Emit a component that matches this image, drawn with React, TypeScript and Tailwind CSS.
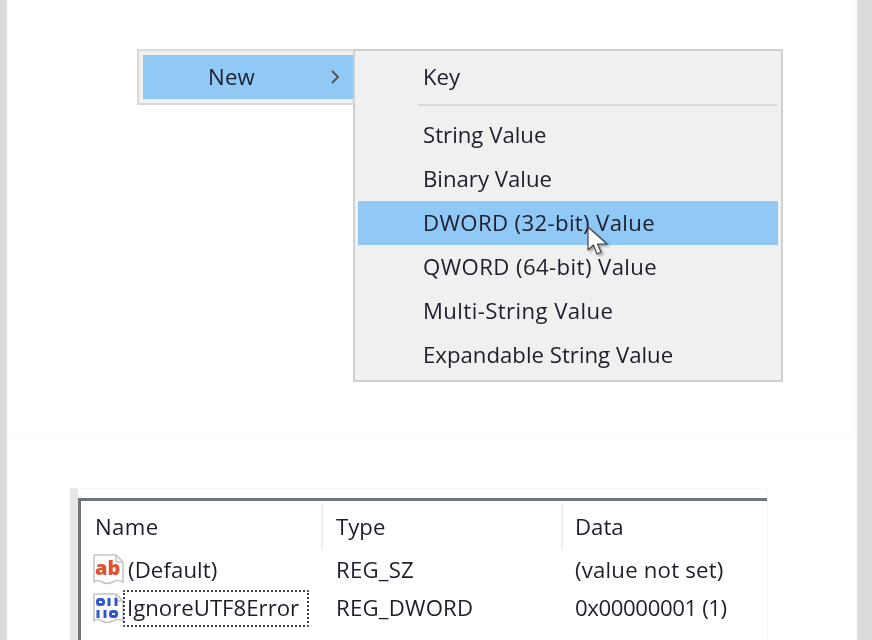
const font = { fontFamily: '"Open Sans", "Noto Sans", sans-serif' };

const groupOne = [
  { label: 'String Value', cls: '' },
  { label: 'Binary Value', cls: '' },
  { label: 'DWORD (32-bit) Value', cls: 'tracking-[0.35px]' },
  { label: 'QWORD (64-bit) Value', cls: 'tracking-[0.4px]' },
  { label: 'Multi-String Value', cls: 'tracking-[0.4px]' },
  { label: 'Expandable String Value', cls: '' },
];

function Cursor() {
  return (
    <svg className="absolute left-[229px] top-[25px] drop-shadow-[2px_2px_1px_rgba(0,0,0,0.3)]" width="24" height="32" viewBox="0 0 24 32">
      <path d="M1 1 L1 24 L6.5 19 L10 28 L14 26 L10.5 18 L20 18 Z" fill="#fff" stroke="#444" strokeWidth="1.2" strokeLinejoin="round" />
    </svg>
  );
}

function RegIcon({ kind }: { kind: 'ab' | 'bin' }) {
  return (
    <svg width="33" height="33" viewBox="0 0 33 33" className="shrink-0">
      <path d="M2 2 L24 2 L31 9 L31 29 Q26 26 21 29 Q15 32 10 29 Q5 26 2 29 Z" fill="#fff" stroke="#c4c4c4" strokeWidth="1.5" />
      <path d="M24 2 L24 9 L31 9" fill="none" stroke="#c4c4c4" strokeWidth="1.5" />
      {kind === 'ab' ? (
        <text x="3" y="22" fontSize="20" fontWeight="800" fill="#e0532e" fontFamily="Open Sans">ab</text>
      ) : (
        <g fill="none" stroke="#2f58cc" strokeWidth="3">
          <rect x="5.5" y="7.5" width="6" height="5" rx="2" />
          <path d="M17 6 V14 M24 6 V14" />
          <path d="M6 18 V26 M13 18 V26" />
          <rect x="18.5" y="19.5" width="6" height="5" rx="2" />
        </g>
      )}
    </svg>
  );
}

function Row({ icon, name, type, data, focused, dataCls }: { icon: 'ab' | 'bin'; name: string; type: string; data: string; focused?: boolean; dataCls: string }) {
  return (
    <div className="flex h-[38px] items-center">
      <div className="flex w-[240px] items-center pl-[11px]">
        <RegIcon kind={icon} />
        <span className={focused ? 'ml-[-2px] h-[37px] rounded-[2px] border-2 border-dotted border-[#444] pl-[2px] pr-[8px] leading-[32px]' : 'ml-[3px] tracking-[0.1px]'}>{name}</span>
      </div>
      <div className="w-[240px] pl-[15px] tracking-[0.2px]">{type}</div>
      <div className={`pl-[14px] ${dataCls}`}>{data}</div>
    </div>
  );
}

export default function App() {
  return (
    <div className="flex h-[640px] w-[872px] overflow-hidden bg-[#dcdcdc] pl-[7px] pr-[15px] text-[22.2px] text-[#1e1e2c]" style={font}>
      <div className="w-[850px] bg-white blur-[0.7px]">
        <div className="h-[438px] w-[847px] border-b border-r border-[#f9f9f9] pt-[49px]">
          <div className="ml-[130px] flex items-start">
            <div className="w-[218px] border-2 border-[#d8d8d8] bg-[#f0f0f0] py-1 pl-1">
              <div className="flex h-[44px] items-center justify-between bg-[#90c8f6] pl-[65px] pr-[13px]">
                <span className="tracking-[0.2px]">New</span>
                <svg width="10" height="14" viewBox="0 0 10 14"><path d="M2 1 L8 7 L2 13" fill="none" stroke="#555" strokeWidth="2" /></svg>
              </div>
            </div>
            <div className="ml-[-2px] h-[333px] w-[430px] border-2 border-[#d0d0d0] bg-[#f0f0f0] px-[3px] pt-[4px]">
              <div className="flex h-[44px] items-center pl-[65px]">Key</div>
              <div className="ml-[60px] mr-[1px] mb-[7px] mt-[5px] h-[2px] bg-[#dadada]" />
              {groupOne.map((item, i) => (
                <div key={item.label} className={`relative flex h-[44px] items-center pl-[65px] ${item.cls} ${i === 2 ? 'bg-[#90c8f6]' : ''}`}>
                  {item.label}
                  {i === 2 && <Cursor />}
                </div>
              ))}
            </div>
          </div>
        </div>
        <div className="ml-[63px] mt-[50px] h-[152px] w-[698px] border-l-[8px] border-t border-r border-[#f6f6f6] border-l-[#e6e6e6] pt-[9px]">
          <div className="h-full border-l-[3px] border-t-[3px] border-[#70757a]">
            <div className="flex h-[50px] items-center pt-[1px]">
              <div className="flex h-[46px] w-[242px] items-center border-r-2 border-[#eeeeee] pl-[14px] tracking-[0.4px]">Name</div>
              <div className="flex h-[46px] w-[240px] items-center border-r-2 border-[#eeeeee] pl-[13px]">Type</div>
              <div className="pl-[12px]">Data</div>
            </div>
            <Row icon="ab" name="(Default)" type="REG_SZ" data="(value not set)" dataCls="tracking-[0.2px]" />
            <Row icon="bin" name="IgnoreUTF8Error" type="REG_DWORD" data="0x00000001 (1)" dataCls="tracking-[-0.4px]" focused />
          </div>
        </div>
      </div>
    </div>
  );
}
